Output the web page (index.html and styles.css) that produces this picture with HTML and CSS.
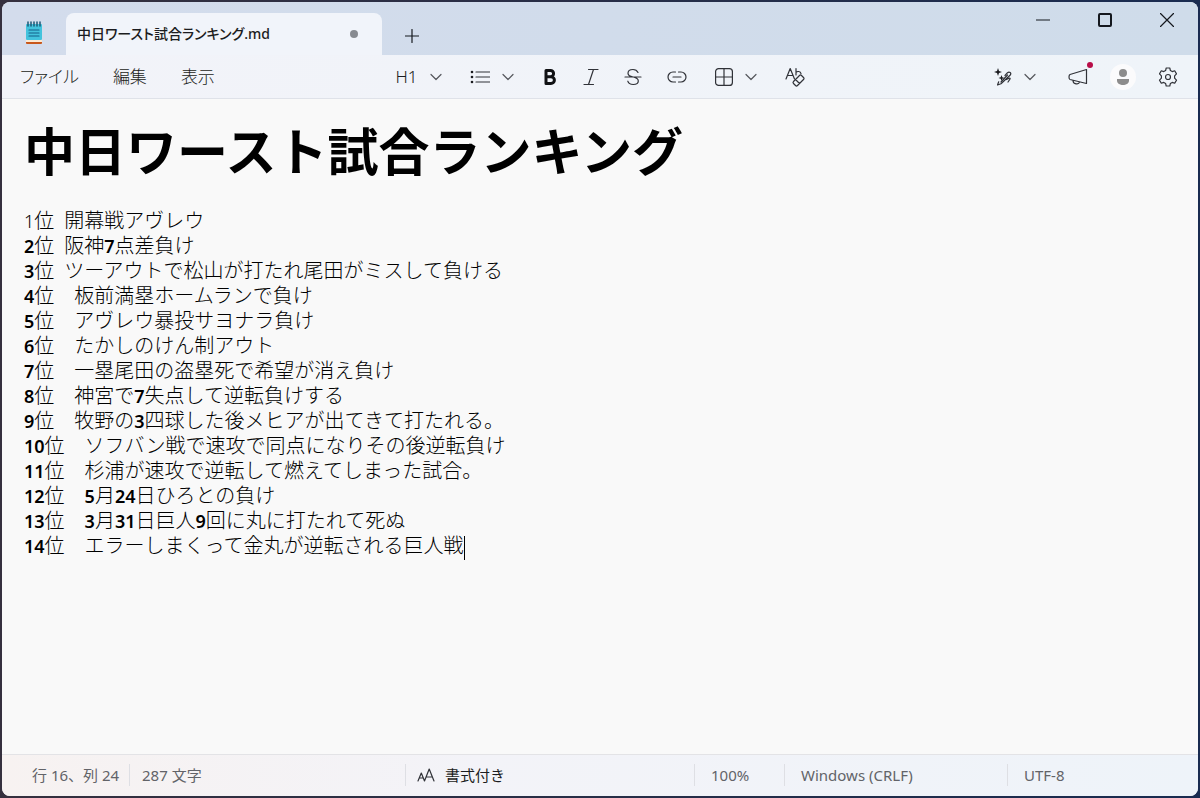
FILE: index.html
```
<!DOCTYPE html>
<html lang="ja">
<head>
	<meta charset="UTF-8">
	<meta name="viewport" content="width=device-width, initial-scale=1">
	<title>中日ワースト試合ランキング.md</title>
	<link rel="stylesheet" href="styles.css">
</head>
<body>
	<div class="window">

		<header class="titlebar">
			<svg class="app-icon" width="18" height="24" viewBox="0 0 18 24">
				<rect x="1" y="18" width="16" height="5" rx="1" fill="#c8571b"/>
				<rect x="1" y="18" width="16" height="3" fill="#fbe9d2"/>
				<rect x="1" y="3" width="16" height="16" rx="1" fill="#43c3dd"/>
				<path d="M3 1v4M6 1v4M9 1v4M12 1v4M15 1v4" stroke="#1b5876" stroke-width="1.5"/>
				<path d="M4 9h10M4 12h10M4 15h10" stroke="#14618a" stroke-width="1.2"/>
			</svg>
			<div class="tab">
				<span class="tab-title">中日ワースト試合ランキング.md</span>
				<span class="tab-dot"></span>
			</div>
			<button class="new-tab" aria-label="新しいタブ">
				<svg width="14" height="14" viewBox="0 0 14 14"><path d="M7 .5v13M.5 7h13"/></svg>
			</button>
			<div class="window-buttons">
				<button aria-label="最小化"><svg width="14" height="14" viewBox="0 0 14 14"><path d="M0 7h14"/></svg></button>
				<button aria-label="最大化"><svg class="thick" width="14" height="14" viewBox="0 0 14 14"><rect x="1" y="1" width="12" height="12" rx="1"/></svg></button>
				<button aria-label="閉じる"><svg width="14" height="14" viewBox="0 0 14 14"><path d="M.5.5l13 13M13.5.5l-13 13"/></svg></button>
			</div>
		</header>

		<div class="toolbar">
			<nav class="menu">
				<button>ファイル</button>
				<button>編集</button>
				<button>表示</button>
			</nav>

			<div class="format">
				<button class="drop heading-button">H1
					<svg class="chevron" width="12" height="8" viewBox="0 0 12 8"><path d="M1 1.5l5 5 5-5"/></svg>
				</button>
				<button class="drop" aria-label="リスト">
					<svg width="20" height="16" viewBox="0 0 20 16">
						<path d="M6 3h13.500M6 8h13.500M6 13h13.500"/>
						<g class="solid"><circle cx="2" cy="3" r="1.300"/><circle cx="2" cy="8" r="1.300"/><circle cx="2" cy="13" r="1.300"/></g>
					</svg>
					<svg class="chevron" width="12" height="8" viewBox="0 0 12 8"><path d="M1 1.500l5 5 5-5"/></svg>
				</button>
				<div class="styles">
					<button aria-label="太字">
						<svg width="16" height="18" viewBox="0 0 16 18"><path class="heavy" d="M4 2.500h4.500a3.100 3.100 0 0 1 0 6.200H4zM4 8.700h5a3.400 3.400 0 0 1 0 6.800H4z"/></svg>
					</button>
					<button aria-label="斜体">
						<svg width="16" height="18" viewBox="0 0 16 18"><path d="M5.500 1.500H15M1 16.500h9.500M10.500 1.500l-5 15"/></svg>
					</button>
					<button aria-label="取り消し線">
						<svg width="18" height="18" viewBox="0 0 18 18"><path d="M14 4.500C13 2.300 11 1.500 9 1.500c-2.800 0-5 1.400-5 3.700C4 7.500 6 8.300 9 9h.5c3 .8 4.800 1.700 4.800 4 0 2.200-2.300 3.500-5.100 3.500-2.500 0-4.700-1-5.400-3.300M1 9h16"/></svg>
					</button>
					<button aria-label="リンク">
						<svg width="20" height="12" viewBox="0 0 20 12"><path d="M8.500 1H6a5 5 0 0 0 0 10h2.500M11.500 1H14a5 5 0 0 1 0 10h-2.500M6 6h8"/></svg>
					</button>
				</div>
				<button class="drop" aria-label="表">
					<svg width="18" height="18" viewBox="0 0 18 18"><rect x=".6" y=".6" width="16.800" height="16.800" rx="3"/><path d="M9 .6v16.800M.6 9h16.800"/></svg>
					<svg class="chevron" width="12" height="8" viewBox="0 0 12 8"><path d="M1 1.500l5 5 5-5"/></svg>
				</button>
				<button aria-label="書式のクリア">
					<svg width="20" height="20" viewBox="0 0 20 20">
						<path d="M1 12L5.200 1.500 9.500 12M2.500 8.500h5.500M11 1.500V8M11 5.500c1-1.500 4.500-1.500 5 1.200"/>
						<path d="M8.500 14.500l6-6c.7-.7 1.300-.7 2 0l2 2c.7.7.7 1.300 0 2l-6 6c-.7.7-1.300.7-2 0l-2-2c-.7-.7-.7-1.300 0-2zM10.500 12.500l4 4"/>
					</svg>
				</button>
			</div>

			<div class="tools">
				<button class="drop" aria-label="書き込みツール">
					<svg width="18" height="18" viewBox="0 0 18 18">
						<path class="solid" d="M4 0l1 3 3 1-3 1-1 3-1-3-3-1 3-1zM7.500 7l.8 2.200 2.200.8-2.200.8-.8 2.200-.8-2.200-2.200-.8 2.200-.8z"/>
						<path d="M11 7.500l2.500-2.800c1.900-1.600 4.200.4 2.800 2.300L7 15.800 3.500 17l1.200-3.200M12.500 11.500l3-1.500c1.500 0 0 2-1.500 4"/>
						<path d="M7 14l6.500-7"/>
					</svg>
					<svg class="chevron" width="12" height="8" viewBox="0 0 12 8"><path d="M1 1.500l5 5 5-5"/></svg>
				</button>
				<button class="news" aria-label="新機能">
					<svg width="20" height="18" viewBox="0 0 20 18"><path d="M18.500 1.500v14L2 11.500c-1-.3-1-1-1-2.500s0-2 1-2.500zM5 12.500c0 4 6 4.500 6.500 1.500"/></svg>
				</button>
				<button class="account" aria-label="アカウント">
					<svg width="14" height="16" viewBox="0 0 14 16"><circle cx="7" cy="4" r="4"/><path d="M1 10h12v1.500c0 3-3 4.500-6 4.500s-6-1.500-6-4.500z"/></svg>
				</button>
				<button aria-label="設定">
					<svg width="20" height="20" viewBox="0 0 20 20">
						<path d="M8.200 1h3.600l.6 2.600 1.800 1 2.500-.8 1.800 3.100-1.900 1.900v2.400l1.900 1.900-1.800 3.100-2.500-.8-1.800 1-.6 2.600H8.200l-.6-2.600-1.800-1-2.500.8-1.800-3.100 1.900-1.900V8.800L1.500 6.900l1.800-3.100 2.500.8 1.800-1z"/>
						<circle cx="10" cy="10" r="2.500"/>
					</svg>
				</button>
			</div>
		</div>

		<main class="editor" contenteditable="true" spellcheck="false">
			<h1>中日ワースト試合ランキング</h1>
			<p><span class="digit">1</span>位&ensp;開幕戦アヴレウ</p>
			<p><b>2</b>位&ensp;阪神<b>7</b>点差負け</p>
			<p><b>3</b>位&ensp;ツーアウトで松山が打たれ尾田がミスして負ける</p>
			<p><b>4</b>位　板前満塁ホームランで負け</p>
			<p><b>5</b>位　アヴレウ暴投サヨナラ負け</p>
			<p><b>6</b>位　たかしのけん制アウト</p>
			<p><b>7</b>位　一塁尾田の盗塁死で希望が消え負け</p>
			<p><b>8</b>位　神宮で<b>7</b>失点して逆転負けする</p>
			<p><b>9</b>位　牧野の<b>3</b>四球した後メヒアが出てきて打たれる。</p>
			<p><b>10</b>位　ソフバン戦で速攻で同点になりその後逆転負け</p>
			<p><b>11</b>位　杉浦が速攻で逆転して燃えてしまった試合。</p>
			<p><b>12</b>位　<b>5</b>月<b>24</b>日ひろとの負け</p>
			<p><b>13</b>位　<b>3</b>月<b>31</b>日巨人<b>9</b>回に丸に打たれて死ぬ</p>
			<p><b>14</b>位　エラーしまくって金丸が逆転される巨人戦<span class="caret"></span></p>
		</main>

		<footer class="statusbar">
			<span class="position">行 16、列 24</span>
			<span class="count">287 文字</span>
			<button class="mode">
				<svg width="18" height="14" viewBox="0 0 18 14"><path d="M1 13l3.300-8 3.200 8M2.200 10h4.300M7.500 13l4.700-12L17 13M9 9h6.500"/></svg>
				書式付き
			</button>
			<span class="zoom">100%</span>
			<span class="eol">Windows (CRLF)</span>
			<span class="encoding">UTF-8</span>
		</footer>

	</div>
</body>
</html>
```
FILE: styles.css
```
* {
	box-sizing: border-box;
}

body {
	margin: 0;
	padding: 2px;
	background: linear-gradient(to right, #35303e, #192b50);
	font-family: "Noto Sans", "Noto Sans CJK JP", sans-serif;
	color: #1b1c20;
}

button {
	display: flex;
	align-items: center;
	justify-content: center;
	padding: 0;
	border: none;
	background: none;
	color: inherit;
	font: inherit;
	cursor: pointer;
}

svg {
	display: block;
	flex: none;
	fill: none;
	stroke: #303238;
	stroke-width: 1.2;
	stroke-linecap: round;
	stroke-linejoin: round;
}

.window {
	display: flex;
	flex-direction: column;
	min-height: calc(100vh - 4px);
	border-radius: 8px;
	overflow: hidden;
	background: #f9f9f9;
}

/* title bar */

.titlebar {
	display: flex;
	height: 53px;
	background: linear-gradient(to right, #d3dcec, #cfdcea);
}

.app-icon {
	margin: 19px 23px 0 23px;
	stroke: none;
}

.tab {
	display: flex;
	align-items: center;
	justify-content: space-between;
	width: 316px;
	margin-top: 11px;
	padding: 0 24px 0 11px;
	border-radius: 8px 8px 0 0;
	background: #f1f4fa;
}

.tab-title {
	font-size: 14px;
	font-weight: 500;
	font-feature-settings: "palt";
	line-height: 20px;
	white-space: nowrap;
}

.tab-dot {
	width: 8px;
	height: 8px;
	border-radius: 50%;
	background: #878a90;
}

.new-tab {
	width: 28px;
	margin: 14px 0 0 16px;
}

.window-buttons {
	display: flex;
	height: 36px;
	margin-left: auto;
}

.window-buttons button {
	width: 62px;
}

.window-buttons svg,
.new-tab svg {
	stroke: #15181e;
}

.window-buttons .thick {
	stroke-width: 2;
}

/* menu and formatting buttons */

.toolbar {
	display: grid;
	grid-template-columns: 1fr auto 1fr;
	align-items: center;
	height: 44px;
	border-bottom: 1px solid #dfe2e9;
	background: linear-gradient(to right, #f2f3f9, #eff4f9);
}

.menu {
	display: flex;
	gap: 34px;
	padding-left: 18px;
	font-size: 17px;
	font-weight: 300;
	font-feature-settings: "palt";
	line-height: 24px;
}

.format {
	display: flex;
	align-items: center;
	gap: 28px;
}

.styles {
	display: flex;
	align-items: center;
	gap: 25px;
}

.drop {
	gap: 12px;
}

.heading-button {
	font-size: 17px;
	font-weight: 300;
	line-height: 24px;
}

.chevron {
	stroke: #55575d;
}

.solid {
	fill: #1b1c20;
	stroke: none;
}

.heavy {
	stroke: #101114;
	stroke-width: 3;
}

.tools {
	display: flex;
	align-items: center;
	justify-content: flex-end;
	padding-right: 20px;
}

.news {
	position: relative;
	margin: 0 22px 0 32px;
}

.news::after {
	content: "";
	position: absolute;
	top: -6px;
	right: -5px;
	width: 6px;
	height: 6px;
	border-radius: 50%;
	background: #b80d48;
}

.account {
	width: 26px;
	height: 26px;
	margin-right: 22px;
	border-radius: 50%;
	background: #fbfbfc;
}

.account svg {
	fill: #8c8c8c;
	stroke: none;
}

/* document */

.editor {
	flex: 1;
	padding: 12px 22px;
	outline: none;
	color: #000;
	font-family: "Noto Sans CJK JP", sans-serif;
	font-size: 20px;
	font-weight: 300;
	line-height: 25px;
}

.editor h1 {
	margin: 0 0 20px;
	font-size: 51px;
	font-weight: 700;
	line-height: 76px;
}

.editor p {
	margin: 0;
}

.editor b,
.digit {
	font-family: "Noto Sans", sans-serif;
	font-size: 18px;
	font-weight: 600;
	line-height: 18px;
}

.editor .digit {
	font-weight: 300;
}

.caret {
	display: inline-block;
	height: 24px;
	border-left: 1px solid #000;
	vertical-align: middle;
}

/* status bar */

.statusbar {
	display: flex;
	align-items: center;
	height: 42px;
	padding-bottom: 2px;
	border-top: 1px solid #e3e3e6;
	background: linear-gradient(to right, #f7f2f1, #f3f3f8 40%, #eef3f9);
	color: #626368;
	font-size: 15px;
	line-height: 22px;
	white-space: nowrap;
}

.statusbar > * + * {
	border-left: 1px solid #dedfe4;
}

.position {
	width: 127px;
	padding-left: 30px;
}

.count {
	flex: 1;
	padding-left: 12px;
}

.mode {
	justify-content: flex-start;
	gap: 10px;
	width: 289px;
	padding-left: 11px;
	color: #1b1c20;
}

.zoom {
	width: 90px;
	padding-left: 16px;
}

.eol {
	width: 223px;
	padding-left: 16px;
}

.encoding {
	width: 191px;
	padding-left: 16px;
}
```
